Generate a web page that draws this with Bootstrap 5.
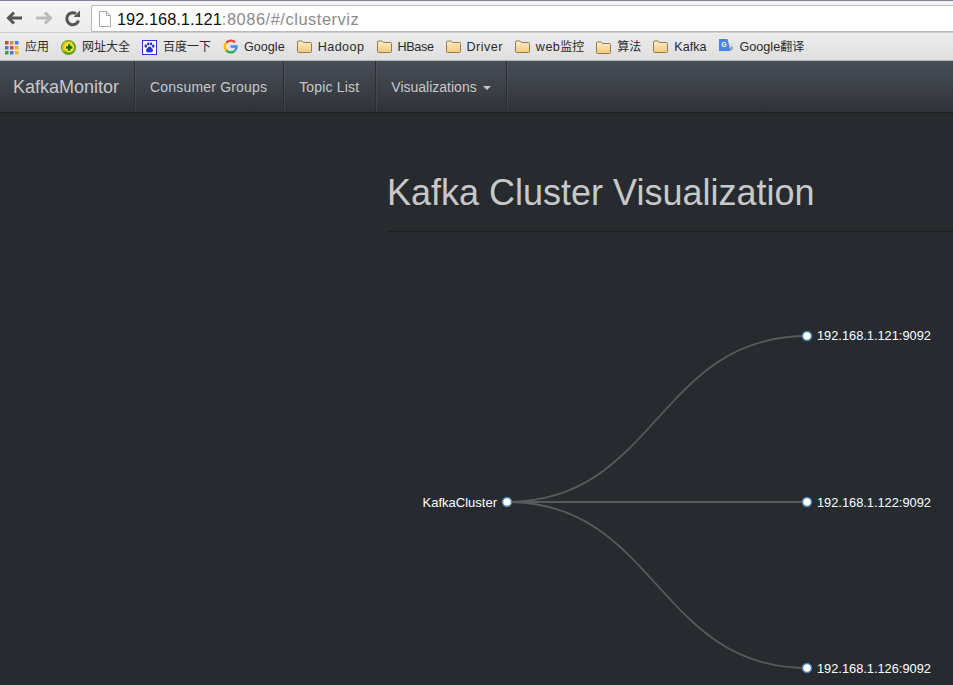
<!DOCTYPE html>
<html lang="en">
<head>
  <meta charset="UTF-8" />
  <meta name="viewport" content="width=device-width, initial-scale=1.0" />
  <title>KafkaMonitor</title>
  <link href="https://cdn.jsdelivr.net/npm/bootstrap@5.3.0/dist/css/bootstrap.min.css" rel="stylesheet" />
  <script src="https://cdn.jsdelivr.net/npm/bootstrap@5.3.0/dist/js/bootstrap.bundle.min.js"></script>
  <style>
    html, body {
      height: 685px;
      overflow: hidden;
    }
    body {
      background-color: #272b30;
      font-family: "Liberation Sans", Arial, sans-serif;
    }
    /* Browser chrome */
    .browser-bar {
      height: 32px;
      padding: 4px 0 0 5px;
      background: linear-gradient(#f4f4f4, #ececec);
      border-top: 1px solid #7b8494;
    }
    .tool-btn {
      width: 20px;
      height: 20px;
      margin: 3px 9px 0 0;
      display: block;
      flex: none;
    }
    .url-box {
      height: 27px;
      margin-left: -1px;
      padding-left: 7px;
      background: #fff;
      border: 1px solid #b9b9b9;
      border-right: 0;
      border-radius: 2px 0 0 2px;
      font-size: 16.4px;
      line-height: 24px;
      color: #8a8a8a;
    }
    .url-icon {
      margin-right: 6px;
    }
    .url-host {
      color: #111;
    }
    .url-rest {
      letter-spacing: .55px;
    }
    .bookmarks {
      height: 29px;
      padding: 1px 0 0 5px;
      background: linear-gradient(#ececec, #dfdfdf);
      border-top: 1px solid #cfcfcf;
      border-bottom: 1px solid #b5b5b5;
      font-family: "Liberation Sans", "Noto Sans CJK SC", sans-serif;
      font-size: 12px;
      color: #2b2b2b;
      gap: 12px;
      white-space: nowrap;
    }
    .bm-item {
      gap: 6px;
    }
    .bm-item-first {
      gap: 5px;
    }
    .bm-latin {
      font-size: 12.6px;
    }
    .bm-wide {
      letter-spacing: .45px;
    }
    .bm-narrow {
      letter-spacing: -.35px;
    }
    .bm-icon {
      width: 15px;
      height: 15px;
      flex: none;
      display: block;
    }
    /* Navbar */
    .kafka-nav {
      height: 52px;
      padding: 0;
      background: linear-gradient(#484c56, #3a3e45 60%, #2f3236);
      border-bottom: 1px solid #1c1e22;
      align-items: stretch;
      justify-content: flex-start;
    }
    .kafka-nav .navbar-brand {
      padding: 2px 15px 0 13px;
      margin: 0;
      display: flex;
      align-items: center;
      font-size: 18px;
      color: #c8c8c8;
      border-right: 1px solid #2b2e32;
      box-shadow: 1px 0 0 rgba(255, 255, 255, .06);
    }
    .kafka-nav .nav-link {
      height: 100%;
      padding: 2px 16px 0 15px;
      display: flex;
      align-items: center;
      font-size: 14px;
      letter-spacing: .18px;
      color: #c8c8c8;
      border-right: 1px solid #2b2e32;
      box-shadow: 1px 0 0 rgba(255, 255, 255, .06);
    }
    .kafka-nav .dropdown-toggle {
      padding-right: 15px;
      letter-spacing: 0;
    }
    .kafka-nav .dropdown-toggle::after {
      margin-left: 6px;
      border-top-width: 4px;
      border-left-width: 4px;
      border-right-width: 4px;
    }
    /* Page */
    .page-main {
      margin-left: 387px;
    }
    .page-title {
      margin: 60px 0 0;
      padding-bottom: 18px;
      font-size: 36px;
      line-height: 1.1;
      font-weight: 400;
      color: #c8c8c8;
      border-bottom: 1px solid #1c1e22;
    }
    .cluster-viz {
      display: block;
      width: 566px;
      height: 453px;
    }
    .link-line {
      fill: none;
      stroke: #585b5e;
      stroke-width: 1.8;
    }
    .node-dot {
      fill: #fff;
      stroke: #4682b4;
      stroke-width: 1.5;
    }
    .node-text {
      font-family: "Liberation Sans", Arial, sans-serif;
      font-size: 13px;
      fill: #fff;
    }
    .node-ip {
      font-size: 12.8px;
    }
  </style>
</head>
<body>
  <svg width="0" height="0" class="d-block">
    <defs>
      <linearGradient id="folderFill" x1="0" y1="0" x2="0" y2="1">
        <stop offset="0" stop-color="#fdeec8"/>
        <stop offset="1" stop-color="#f8c878"/>
      </linearGradient>
      <symbol id="folderIcon" viewBox="0 0 15 15">
        <path d="M.5 3a1 1 0 0 1 1-1h3.500l1.500 1.500h7a1 1 0 0 1 1 1v8a1 1 0 0 1-1 1h-12a1 1 0 0 1-1-1z" fill="url(#folderFill)" stroke="#8f7c58"/>
      </symbol>
    </defs>
  </svg>

  <!-- Browser toolbar -->
  <div class="browser-bar d-flex">
    <svg class="tool-btn" viewBox="0 0 20 20"><path d="M17 10H5M9 4.500 3.500 10 9 15.500" fill="none" stroke="#555" stroke-width="3"/></svg>
    <svg class="tool-btn" viewBox="0 0 20 20"><path d="M2 10h13M11 4.500l5.500 5.500-5.500 5.500" fill="none" stroke="#b9b9b9" stroke-width="3"/></svg>
    <svg class="tool-btn" viewBox="0 0 20 20"><path d="M15.500 12.500A6 6 0 1 1 13 5.700" fill="none" stroke="#555" stroke-width="3"/><path d="M10.500 9H17V2.500z" fill="#555"/></svg>
    <div class="url-box flex-grow-1 d-flex align-items-center">
      <svg class="url-icon" width="12" height="16" viewBox="0 0 12 16"><path d="M.5.500h7l4 4v11H.5z" fill="#fff" stroke="#a8a8a8"/><path d="M7.500.500v4h4" fill="none" stroke="#a8a8a8"/></svg>
      <span><span class="url-host">192.168.1.121</span><span class="url-rest">:8086/#/clusterviz</span></span>
    </div>
  </div>

  <!-- Bookmarks -->
  <div class="bookmarks d-flex align-items-center">
    <div class="bm-item bm-item-first d-flex align-items-center">
      <svg class="bm-icon" viewBox="0 0 15 15">
        <rect x="0" y="1" width="3.500" height="3.500" fill="#d9463c"/><rect x="5" y="1" width="3.500" height="3.500" fill="#e8872c"/><rect x="10" y="1" width="3.500" height="3.500" fill="#3f7fe0"/>
        <rect x="0" y="6" width="3.500" height="3.500" fill="#3f7fe0"/><rect x="5" y="6" width="3.500" height="3.500" fill="#d9463c"/><rect x="10" y="6" width="3.500" height="3.500" fill="#f0b429"/>
        <rect x="0" y="11" width="3.500" height="3.500" fill="#3a9c4e"/><rect x="5" y="11" width="3.500" height="3.500" fill="#3f7fe0"/><rect x="10" y="11" width="3.500" height="3.500" fill="#f0b429"/>
      </svg>
      <span>应用</span>
    </div>
    <div class="bm-item d-flex align-items-center">
      <svg class="bm-icon" viewBox="0 0 15 15"><circle cx="7.500" cy="7.500" r="7.500" fill="#5f9e16"/><path d="M1 7.500a6.500 6.500 0 0 1 11-4.700L3 12a6.500 6.500 0 0 1-2-4.500z" fill="#e6c414"/><circle cx="8.200" cy="7.500" r="5" fill="#f4e23a"/><path d="M8.200 4.300v6.400M5 7.500h6.400" stroke="#14701c" stroke-width="2.400"/></svg>
      <span>网址大全</span>
    </div>
    <div class="bm-item d-flex align-items-center">
      <svg class="bm-icon" viewBox="0 0 15 15"><rect x=".5" y=".5" width="14" height="14" fill="#fff" stroke="#2932e1"/><g fill="#2932e1"><ellipse cx="3.800" cy="6" rx="1.300" ry="1.700"/><ellipse cx="6.200" cy="3.800" rx="1.200" ry="1.600"/><ellipse cx="9" cy="3.800" rx="1.200" ry="1.600"/><ellipse cx="11.300" cy="6" rx="1.300" ry="1.700"/><path d="M7.500 6.500c-1.500 0-2 1.500-3 2.500S4 12.800 6 12.500c1-.2 2-.2 3 0 2 .3 2.500-2.500 1.500-3.500s-1.500-2.500-3-2.500z"/></g></svg>
      <span>百度一下</span>
    </div>
    <div class="bm-item d-flex align-items-center">
      <svg class="bm-icon" viewBox="0 0 15 15" fill="none" stroke-width="2.300"><path d="M12 3.300A6 6 0 0 0 3.200 3.800" stroke="#ea4335"/><path d="M3.200 3.800a6 6 0 0 0 0 7.400" stroke="#fbbc05"/><path d="M3.200 11.200a6 6 0 0 0 8.600.6" stroke="#34a853"/><path d="M11.800 11.800A6 6 0 0 0 13.500 7.500H7.600" stroke="#4285f4"/></svg>
      <span class="bm-latin">Google</span>
    </div>
    <div class="bm-item d-flex align-items-center">
      <svg class="bm-icon"><use href="#folderIcon"/></svg>
      <span class="bm-latin bm-wide">Hadoop</span>
    </div>
    <div class="bm-item d-flex align-items-center">
      <svg class="bm-icon"><use href="#folderIcon"/></svg>
      <span class="bm-latin bm-narrow">HBase</span>
    </div>
    <div class="bm-item d-flex align-items-center">
      <svg class="bm-icon"><use href="#folderIcon"/></svg>
      <span class="bm-latin bm-wide">Driver</span>
    </div>
    <div class="bm-item d-flex align-items-center">
      <svg class="bm-icon"><use href="#folderIcon"/></svg>
      <span><span class="bm-latin bm-wide">web</span>监控</span>
    </div>
    <div class="bm-item d-flex align-items-center">
      <svg class="bm-icon"><use href="#folderIcon"/></svg>
      <span>算法</span>
    </div>
    <div class="bm-item d-flex align-items-center">
      <svg class="bm-icon"><use href="#folderIcon"/></svg>
      <span class="bm-latin">Kafka</span>
    </div>
    <div class="bm-item d-flex align-items-center">
      <svg class="bm-icon" viewBox="0 0 15 15"><path d="M5 4h10v11H8z" fill="#e2e2e2"/><path d="M0 0h8.500l3 12H0z" fill="#4a80e8"/><text x="5" y="8" text-anchor="middle" font-size="7" font-weight="700" font-family="Liberation Sans" fill="#fff">G</text><path d="M12 6.500l.7 1.800 1.800.1-1.400 1.200.5 1.800-1.600-1-1 .6z" fill="#7f8a9a"/></svg>
      <span><span class="bm-latin">Google</span>翻译</span>
    </div>
  </div>

  <!-- Navbar -->
  <nav class="navbar kafka-nav">
    <a class="navbar-brand" href="#">KafkaMonitor</a>
    <ul class="navbar-nav flex-row">
      <li class="nav-item"><a class="nav-link" href="#">Consumer Groups</a></li>
      <li class="nav-item"><a class="nav-link" href="#">Topic List</a></li>
      <li class="nav-item dropdown"><a class="nav-link dropdown-toggle" href="#" data-bs-toggle="dropdown">Visualizations</a></li>
    </ul>
  </nav>

  <!-- Content -->
  <div class="page-main">
    <h1 class="page-title">Kafka Cluster Visualization</h1>
    <svg class="cluster-viz" viewBox="387 232 566 453">
      <path class="link-line" d="M507,502C657,502 657,336 807,336"/>
      <path class="link-line" d="M507,502C657,502 657,502 807,502"/>
      <path class="link-line" d="M507,502C657,502 657,668 807,668"/>
      <circle class="node-dot" cx="507" cy="502" r="4.500"/>
      <circle class="node-dot" cx="807" cy="336" r="4.500"/>
      <circle class="node-dot" cx="807" cy="502" r="4.500"/>
      <circle class="node-dot" cx="807" cy="668" r="4.500"/>
      <text class="node-text" x="497" y="507" text-anchor="end">KafkaCluster</text>
      <text class="node-text node-ip" x="817" y="340">192.168.1.121:9092</text>
      <text class="node-text node-ip" x="817" y="507">192.168.1.122:9092</text>
      <text class="node-text node-ip" x="817" y="673">192.168.1.126:9092</text>
    </svg>
  </div>
</body>
</html>
